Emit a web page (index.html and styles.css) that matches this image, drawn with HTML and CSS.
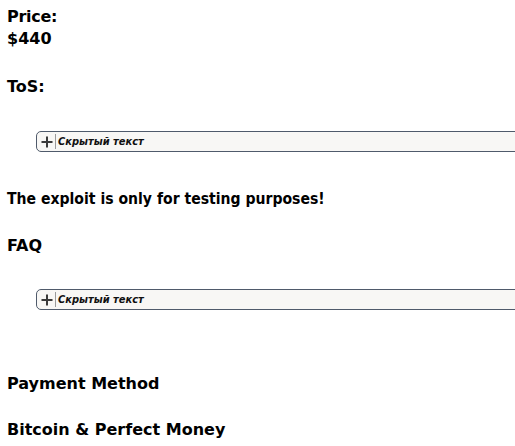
FILE: index.html
```html
<!DOCTYPE html>
<html>
<head>
<meta charset="utf-8">
<link rel="stylesheet" href="styles.css">
</head>
<body>
<div class="post">
  <div class="line narrow-sm">Price:</div>
  <div class="line">$440</div>
  <div class="line gap-tos">ToS:</div>
  <div class="spoiler sp-1">
    <span class="sp-icon"><svg width="12" height="12" viewBox="0 0 12 12"><path d="M0.5 6H11.5M6 0.5V11.5" stroke="#3a3a3a" stroke-width="2" fill="none"/></svg></span>
    <span class="sp-sep"></span>
    <span class="sp-label">Скрытый текст</span>
  </div>
  <div class="line gap-exploit narrow">The exploit is only for testing purposes!</div>
  <div class="line gap-faq">FAQ</div>
  <div class="spoiler sp-2">
    <span class="sp-icon"><svg width="12" height="12" viewBox="0 0 12 12"><path d="M0.5 6H11.5M6 0.5V11.5" stroke="#3a3a3a" stroke-width="2" fill="none"/></svg></span>
    <span class="sp-sep"></span>
    <span class="sp-label">Скрытый текст</span>
  </div>
  <div class="line gap-pay">Payment Method</div>
  <div class="line gap-btc">Bitcoin &amp; Perfect Money</div>
</div>
</body>
</html>
```
FILE: styles.css
```css
html, body {
  margin: 0;
  padding: 0;
  overflow: hidden;
  background: #fff;
}
.post {
  padding: 6px 0 0 7px;
  overflow: hidden;
  font-family: "DejaVu Sans", Verdana, sans-serif;
  font-weight: bold;
  font-size: 16px;
  color: #000;
}
.line {
  line-height: 22px;
  white-space: nowrap;
}
.narrow {
  font-family: "DejaVu Sans Condensed", "DejaVu Sans", sans-serif;
  font-size: 15.6px;
}
.narrow-sm {
  letter-spacing: -0.3px;
}
.gap-tos { margin-top: 26px; }
.gap-exploit { margin-top: 36px; }
.gap-faq { margin-top: 25px; }
.gap-pay { margin-top: 63px; }
.gap-btc { margin-top: 24px; }
.sp-1 { margin-top: 33px; }
.sp-2 { margin-top: 32px; }
.spoiler {
  margin-left: 29px;
  margin-right: -20px;
  height: 19px;
  border: 1px solid #4f5a6b;
  border-radius: 5px 0 0 5px;
  background: #f8f7f5;
  display: flex;
  align-items: center;
}
.sp-icon {
  display: flex;
  margin-left: 4px;
  width: 12px;
  height: 12px;
}
.sp-sep {
  width: 1px;
  height: 15px;
  background: #9a9a9a;
  margin-left: 2px;
}
.sp-label {
  margin-left: 2px;
  font-family: "DejaVu Sans Condensed", "DejaVu Sans", sans-serif;
  font-size: 11px;
  font-style: italic;
  font-weight: bold;
  color: #111;
}
```
